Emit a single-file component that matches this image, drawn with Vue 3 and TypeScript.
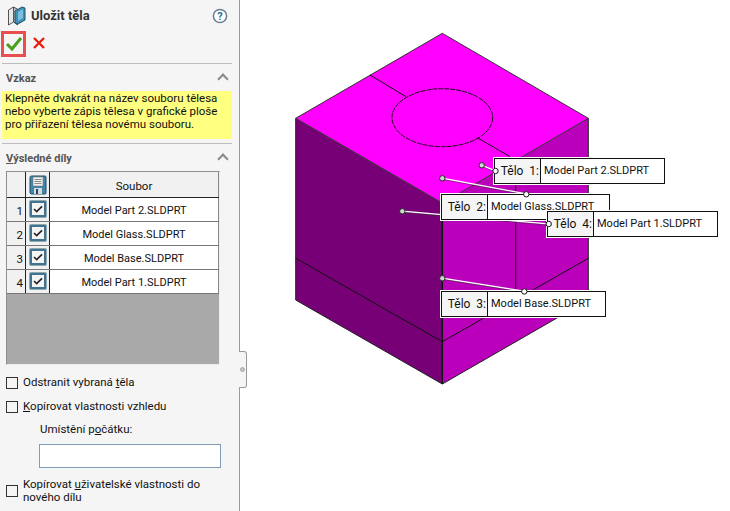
<script setup lang="ts">
const rows = ['Model Part 2.SLDPRT', 'Model Glass.SLDPRT', 'Model Base.SLDPRT', 'Model Part 1.SLDPRT']
const labels = [
  { n: 1, name: 'Model Part 2.SLDPRT', cls: 'l1' },
  { n: 2, name: 'Model Glass.SLDPRT', cls: 'l2' },
  { n: 3, name: 'Model Base.SLDPRT', cls: 'l3' },
  { n: 4, name: 'Model Part 1.SLDPRT', cls: 'l4' },
]
const leaders = [
  { x1: 481.7, y1: 165.3, x2: 495.5, y2: 171 },
  { x1: 442.3, y1: 178.3, x2: 526.3, y2: 194 },
  { x1: 402.3, y1: 211.3, x2: 548.7, y2: 224 },
  { x1: 442.3, y1: 278.3, x2: 524.3, y2: 291.3 },
]
</script>

<template>
  <div class="app">
    <aside class="panel">
      <header class="head">
        <svg class="logo" width="20" height="22" viewBox="0 0 20 22">
          <path d="M1.500 5l5-3v15l-5 3z" fill="#e8e8e8" stroke="#555" />
          <path d="M6.500 2l4 2v16l-4-3z" fill="#b5b5b5" stroke="#555" />
          <path d="M8 6l7-4 3 1v12l-7 4-3-1z" fill="#3e8fb8" stroke="#24566f" />
          <path d="M11 7l5-3v9l-5 3z" fill="#7cc0de" />
        </svg>
        <h1>Uložit těla</h1>
        <svg class="help" width="16" height="16" viewBox="0 0 16 16">
          <circle cx="8" cy="8" r="6.600" fill="#fff" stroke="#6b7f92" stroke-width="1.500" />
          <text x="8" y="12" text-anchor="middle" class="q">?</text>
        </svg>
      </header>
      <div class="actions">
        <button class="ok">
          <svg width="18" height="16" viewBox="0 0 18 16">
            <path d="M2 8l5 5L16 2" fill="none" stroke="#46a01e" stroke-width="3" />
          </svg>
        </button>
        <svg class="cancel" width="14" height="14" viewBox="0 0 14 14">
          <path d="M2 2l10 10M12 2L2 12" stroke="#e2220c" stroke-width="2.400" />
        </svg>
      </div>

      <section class="group">
        <div class="gh"><span>Vzkaz</span><i class="chev"></i></div>
        <p class="msg">Klepněte dvakrát na název souboru tělesa<br />nebo vyberte zápis tělesa v grafické ploše<br />pro přiřazení tělesa novému souboru.</p>
      </section>

      <section class="group second">
        <div class="gh"><span><u>V</u>ýsledné díly</span><i class="chev"></i></div>
        <div class="table">
          <div class="row hd">
            <div class="c0"></div>
            <div class="c1">
              <svg width="18" height="20" viewBox="0 0 18 20">
                <path d="M1 2.500Q1 1 2.500 1H16q1 0 1 1v16q0 1-1 1H2.500Q1 19 1 17.500z" fill="#3f87ad" stroke="#234d66" />
                <rect x="4" y="2" width="10" height="9" fill="#f1f1f1" stroke="#777" stroke-width=".6" />
                <path d="M5.500 4.500h7M5.500 6.500h7M5.500 8.500h7" stroke="#888" />
                <rect x="5" y="13" width="8" height="6" fill="#d8d8d8" />
                <rect x="7" y="14" width="2" height="5" fill="#234d66" />
              </svg>
            </div>
            <div class="c2">Soubor</div>
          </div>
          <div v-for="(r, i) in rows" :key="r" class="row">
            <div class="c0 num">{{ i + 1 }}</div>
            <div class="c1"><span class="cb"><svg width="10" height="8" viewBox="0 0 11 9"><path d="M1 4.500l3 3 6-6" fill="none" stroke="#222" stroke-width="1.800" /></svg></span></div>
            <div class="c2">{{ r }}</div>
          </div>
          <div class="empty"></div>
        </div>
      </section>

      <label class="check c-a"><i></i><span>Odstranit vybraná <u>t</u>ěla</span></label>
      <label class="check c-b"><i></i><span><u>K</u>opírovat vlastnosti vzhledu</span></label>
      <div class="origin">Umístění p<u>o</u>čátku:</div>
      <div class="field"></div>
      <label class="check c-c"><i></i><span>Kopírovat <u>u</u>živatelské vlastnosti do<br />nového dílu</span></label>
    </aside>

    <div class="handle"><b></b></div>

    <main class="canvas">
      <svg class="model" width="730" height="511" viewBox="0 0 730 511">
        <polygon points="442.300,33.300 588.300,118.300 442.300,203 295.700,118.300" fill="#ff00ff" />
        <polygon points="295.700,118.300 442.300,203 442.300,384 295.700,300" fill="#770077" />
        <polygon points="588.300,118.300 442.300,203 442.300,384 588.300,300" fill="#bb00bb" />
        <g fill="none" stroke="#111">
          <path d="M295.700 118.300L442.300 203L588.300 118.300M442.300 33.300L295.700 118.300M442.300 33.300L588.300 118.300" stroke="#333" />
          <path d="M295.700 118.300V300L442.300 384L588.300 300V118.300" stroke="#222" />
          <path d="M442.300 203V384" stroke-width="1.500" />
          <path d="M370 75L406 96.700M477.300 137.700L510 156.700M515.700 160.400V299M295.700 258.300L442.300 341.700L588.300 258.300" />
          <ellipse cx="442.300" cy="117.700" rx="50.300" ry="29" stroke-dasharray="5 1" />
        </g>
        <g v-for="(l, i) in leaders" :key="i">
          <line :x1="l.x1" :y1="l.y1" :x2="l.x2" :y2="l.y2" stroke="#fff" stroke-width="1.400" />
          <line :x1="l.x1" :y1="l.y1" :x2="l.x2" :y2="l.y2" stroke="#222" stroke-width="0.500" transform="translate(0 1)" />
          <circle :cx="l.x1" :cy="l.y1" r="2.700" fill="#cfd8cf" stroke="#222" />
        </g>
      </svg>
      <div v-for="l in labels" :key="l.n" class="tag" :class="l.cls">
        <span class="t">Tělo&nbsp; {{ l.n }}:</span><span class="m">{{ l.name }}</span>
      </div>
      <svg class="dots" width="730" height="511" viewBox="0 0 730 511">
        <g fill="#fff" stroke="#111">
          <circle cx="495.500" cy="171" r="2.700" />
          <circle cx="526.300" cy="194.300" r="2.700" />
          <circle cx="548.700" cy="224" r="2.700" />
          <circle cx="524.300" cy="291.500" r="2.700" />
        </g>
      </svg>
    </main>
  </div>
</template>

<style>
html, body { margin: 0; background: #fff; overflow: hidden; }
</style>

<style scoped>
.app { position: relative; width: 730px; height: 511px; font-family: Roboto, "Open Sans", sans-serif; font-size: 11.500px; color: #111; overflow: hidden; background: #fff; }
.panel { position: relative; z-index: 2; box-sizing: border-box; width: 240px; height: 511px; background: #f5f5f5; border-right: 1px solid #9a9a9a; padding: 0 7px 0 2px; display: flex; flex-direction: column; }
.head { height: 31px; display: flex; align-items: center; padding-left: 5px; }
.logo { margin-right: 4px; }
h1 { margin: 0; font-size: 13px; font-weight: 700; color: #333; flex: 1; }
.help { margin-right: 4px; }
.q { font: 700 11px Roboto, sans-serif; fill: #2a6f9e; }
.actions { display: flex; align-items: center; height: 32px; border-bottom: 1px solid #bdbdbd; gap: 6px; }
.ok { box-sizing: border-box; width: 25px; height: 26px; margin: -7px 0 0 -1px; border: 3px solid #ea4f4f; background: #f5f5f5; padding: 0; display: flex; align-items: center; justify-content: center; }
.cancel { margin-top: -9px; }
.group { display: flex; flex-direction: column; }
.gh { height: 27px; display: flex; align-items: center; justify-content: space-between; padding: 2px 3px 0 4px; box-sizing: border-box; font-weight: 700; font-size: 11px; color: #555; }
.chev { width: 6px; height: 6px; border-left: 2px solid #8a8a8a; border-top: 2px solid #8a8a8a; transform: rotate(45deg); margin: 1px 2px 0 0; }
.msg { margin: 0; background: #ffff80; height: 48px; padding: 1px 3px; box-sizing: border-box; line-height: 13px; color: #111; white-space: nowrap; }
.second { border-top: 1px solid #bdbdbd; margin-top: 4px; }
.table { margin: 0 0 0 4px; width: 214px; height: 194px; border: 1px solid #8f8f8f; border-right-color: #eee; border-bottom-color: #eee; box-sizing: border-box; background: #a9a9a9; display: flex; flex-direction: column; font-size: 11px; }
.row { display: flex; height: 24px; background: #fff; border-bottom: 1px solid #777; box-sizing: border-box; }
.row.hd { height: 26px; border-bottom-color: #222; background: #f1f1f1; }
.c0 { width: 19px; background: #f1f1f1; border-right: 1px solid #222; box-sizing: border-box; }
.num { text-align: right; padding-right: 2px; padding-top: 1px; line-height: 24px; font-size: 11.500px; }
.c1 { width: 24px; background: #f1f1f1; border-right: 1px solid #222; box-sizing: border-box; display: flex; align-items: center; justify-content: center; }
.c2 { flex: 1; text-align: center; padding-top: 1px; line-height: 23px; border-right: 1px solid #888; box-sizing: border-box; }
.hd .c2 { padding-top: 2px; line-height: 25px; font-size: 11.500px; }
.cb { box-sizing: border-box; width: 16px; height: 16px; margin-top: -1px; background: #f4f4f4; border: 2px solid #3f7390; border-radius: 1px; box-shadow: 0 0 0 1px #8fa6b3; display: flex; align-items: center; justify-content: center; }
.empty { flex: 1; background: #a9a9a9; }
.check { display: flex; align-items: center; gap: 5px; margin-left: 4px; line-height: 13px; }
.check i { width: 10px; height: 10px; border: 1px solid #333; background: #f5f5f5; flex: none; }
.c-a { margin-top: 11px; height: 13px; }
.c-b { margin-top: 11px; height: 13px; }
.origin { margin: 10px 0 0 38px; line-height: 13px; }
.field { box-sizing: border-box; margin: 8px 0 0 37px; width: 182px; height: 24px; background: #fff; border: 1px solid #7f9db9; }
.c-c { margin-top: 10px; height: 26px; }
.handle { position: absolute; z-index: 3; left: 239px; top: 351px; width: 8px; height: 37px; box-sizing: border-box; background: #f5f5f5; border: 1px solid #9a9a9a; border-left: 0; border-radius: 0 3px 3px 0; display: flex; align-items: center; justify-content: center; }
.handle b { width: 5px; height: 5px; border-radius: 50%; background: #c4c4c4; border: 1px solid #aaa; box-sizing: border-box; }
.canvas { position: absolute; inset: 0; }
.model, .dots { position: absolute; left: 0; top: 0; }
.dots { z-index: 1; }
.tag { position: absolute; display: flex; box-sizing: border-box; height: 26px; background: #fff; border: 1px solid #111; box-shadow: 0 0 0 1px #fff; line-height: 24px; white-space: nowrap; font-size: 11px; }
.t { box-sizing: border-box; width: 46px; text-align: right; padding-right: 1px; background: #f5f5f5; border-right: 1px solid #111; flex: none; font-size: 12px; }
.m { padding-left: 3px; }
.l1 { left: 494px; top: 158px; width: 171px; }
.l2 { left: 441px; top: 194px; width: 169px; }
.l3 { left: 441px; top: 291px; width: 165px; }
.l4 { left: 547px; top: 211px; width: 171px; }
</style>
